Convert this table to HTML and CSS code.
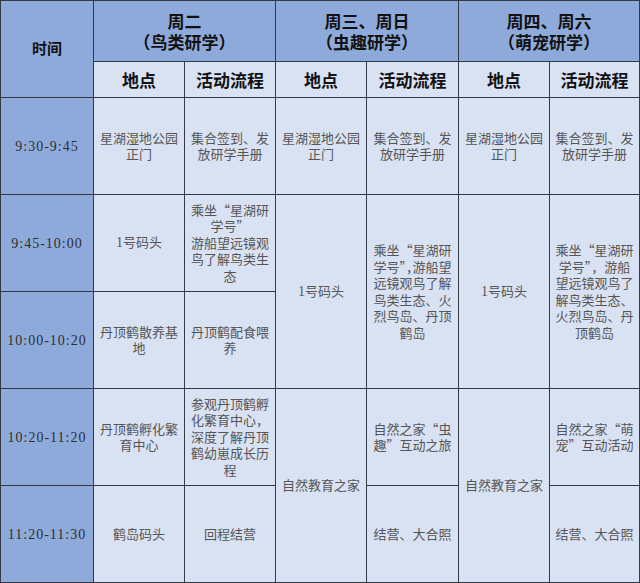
FILE: index.html
```html
<!DOCTYPE html>
<html lang="zh-CN">
<head>
<meta charset="utf-8">
<link rel="stylesheet" href="styles.css">
</head>
<body>
<div class="sheet">
  <div class="cell hd rs2 time-h"><span>时间</span></div>
  <div class="cell hd cs2 grp"><span>周二<br>（鸟类研学）</span></div>
  <div class="cell hd cs2 grp"><span>周三、周日<br>（虫趣研学）</span></div>
  <div class="cell hd cs2 grp"><span>周四、周六<br>（萌宠研学）</span></div>

  <div class="cell sub"><span>地点</span></div>
  <div class="cell sub"><span>活动流程</span></div>
  <div class="cell sub"><span>地点</span></div>
  <div class="cell sub"><span>活动流程</span></div>
  <div class="cell sub"><span>地点</span></div>
  <div class="cell sub"><span>活动流程</span></div>

  <div class="cell time"><span>9:30-9:45</span></div>
  <div class="cell body"><span>星湖湿地公园<br>正门</span></div>
  <div class="cell body"><span>集合签到、发<br>放研学手册</span></div>
  <div class="cell body"><span>星湖湿地公园<br>正门</span></div>
  <div class="cell body"><span>集合签到、发<br>放研学手册</span></div>
  <div class="cell body"><span>星湖湿地公园<br>正门</span></div>
  <div class="cell body"><span>集合签到、发<br>放研学手册</span></div>

  <div class="cell time"><span>9:45-10:00</span></div>
  <div class="cell body"><span><span class="lat">1</span>号码头</span></div>
  <div class="cell body"><span>乘坐“星湖研<br>学号”<br>游船望远镜观<br>鸟了解鸟类生<br>态</span></div>
  <div class="cell body rs2"><span><span class="lat">1</span>号码头</span></div>
  <div class="cell body rs2"><span>乘坐“星湖研<br>学号<span class="half">”，</span>游船望<br>远镜观鸟了解<br>鸟类生态、火<br>烈鸟岛、丹顶<br>鹤岛</span></div>
  <div class="cell body rs2"><span><span class="lat">1</span>号码头</span></div>
  <div class="cell body rs2"><span>乘坐“星湖研<br>学号”，游船<br>望远镜观鸟了<br>解鸟类生态、<br>火烈鸟岛、丹<br>顶鹤岛</span></div>

  <div class="cell time"><span>10:00-10:20</span></div>
  <div class="cell body"><span>丹顶鹤散养基<br>地</span></div>
  <div class="cell body"><span>丹顶鹤配食喂<br>养</span></div>

  <div class="cell time"><span>10:20-11:20</span></div>
  <div class="cell body"><span>丹顶鹤孵化繁<br>育中心</span></div>
  <div class="cell body"><span>参观丹顶鹤孵<br>化繁育中心，<br>深度了解丹顶<br>鹤幼崽成长历<br>程</span></div>
  <div class="cell body rs2"><span>自然教育之家</span></div>
  <div class="cell body"><span>自然之家“虫<br>趣”互动之旅</span></div>
  <div class="cell body rs2"><span>自然教育之家</span></div>
  <div class="cell body"><span>自然之家“萌<br>宠”互动活动</span></div>

  <div class="cell time"><span>11:20-11:30</span></div>
  <div class="cell body"><span>鹤岛码头</span></div>
  <div class="cell body"><span>回程结营</span></div>
  <div class="cell body"><span>结营、大合照</span></div>
  <div class="cell body"><span>结营、大合照</span></div>
</div>
</body>
</html>
```
FILE: styles.css
```css
html, body {
  margin: 0;
  padding: 0;
  background: #ffffff;
}

.sheet {
  display: grid;
  grid-template-columns: 92px 90px 90px 90px 91px 90px 89px;
  grid-template-rows: 60px 35px 96px 96px 96px 96px 96px;
  gap: 1px;
  padding: 1px;
  width: 640px;
  height: 583px;
  box-sizing: border-box;
  background: #343a44;
  font-family: "Noto Sans CJK SC", sans-serif;
}

.cell {
  display: flex;
  align-items: center;
  justify-content: center;
  text-align: center;
  white-space: nowrap;
  overflow: visible;
}

.rs2 { grid-row: span 2; }
.cs2 { grid-column: span 2; }

.hd {
  background: #8eaadb;
  color: #111;
  font-weight: 700;
}

.time-h {
  font-size: 15px;
  line-height: 18px;
  padding-bottom: 2px;
}

.grp {
  font-size: 17px;
  line-height: 21px;
  padding-bottom: 1px;
}

.sub {
  background: #d9e2f3;
  color: #111;
  font-weight: 700;
  font-size: 17px;
  line-height: 20px;
}

.time {
  background: #8eaadb;
  color: #2e2e2e;
  font-family: "Liberation Serif", serif;
  font-size: 14px;
  letter-spacing: 1px;
  padding-top: 2px;
}

.body {
  background: #d9e2f3;
  color: #555;
  font-size: 13px;
  line-height: 16.5px;
}

.lat {
  font-family: "Liberation Serif", serif;
  font-size: 14px;
}

.half {
  font-feature-settings: "halt";
}
```
